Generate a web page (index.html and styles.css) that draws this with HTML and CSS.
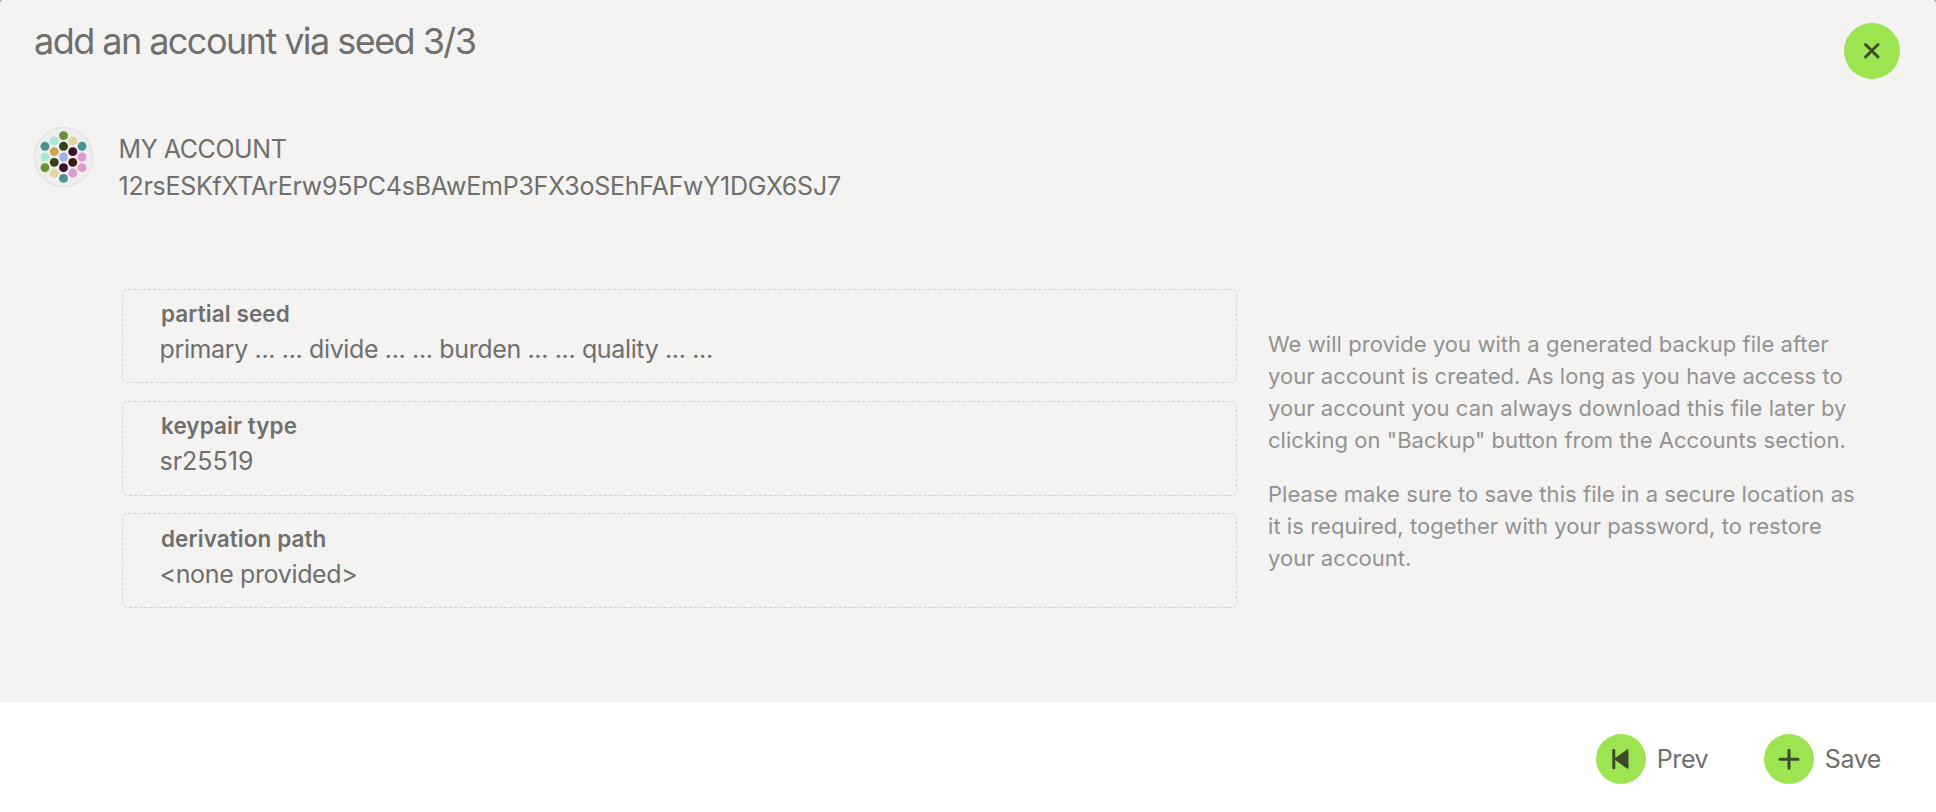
FILE: index.html
```html
<!DOCTYPE html>
<html lang="en">

<head>
  <meta charset="UTF-8">
  <meta name="viewport" content="width=device-width, initial-scale=1.0">
  <title>add an account via seed</title>
  <link rel="stylesheet" href="styles.css">
</head>

<body>
  <div class="modal">
    <div class="header">
      <h1 class="title">add an account via seed 3/3</h1>
      <button class="icon-button icon-button--close" aria-label="close">
        <svg width="56" height="56" viewBox="0 0 56 56">
          <path d="M21.5 21.5 34 34M34 21.5 21.5 34" />
        </svg>
      </button>
    </div>

    <div class="content">
      <div class="address">
        <svg class="identicon" viewBox="0 0 64 64">
          <circle cx="32" cy="32" r="32" fill="#eeeeee" />
          <circle cx="32" cy="8" r="5" fill="#67933a" />
          <circle cx="32" cy="20" r="5" fill="#354219" />
          <circle cx="21.6" cy="14" r="5" fill="#a9e8d2" />
          <circle cx="11.2" cy="20" r="5" fill="#4a9293" />
          <circle cx="21.6" cy="26" r="5" fill="#cfa250" />
          <circle cx="11.2" cy="32" r="5" fill="#a9e8d2" />
          <circle cx="11.2" cy="44" r="5" fill="#67933a" />
          <circle cx="21.6" cy="38" r="5" fill="#354219" />
          <circle cx="21.6" cy="50" r="5" fill="#e5d5a0" />
          <circle cx="32" cy="56" r="5" fill="#4a9293" />
          <circle cx="32" cy="44" r="5" fill="#3b112b" />
          <circle cx="42.4" cy="50" r="5" fill="#dc9bd3" />
          <circle cx="52.8" cy="44" r="5" fill="#dc9bd3" />
          <circle cx="42.4" cy="38" r="5" fill="#3d1c14" />
          <circle cx="52.8" cy="32" r="5" fill="#dc9bd3" />
          <circle cx="52.8" cy="20" r="5" fill="#4a9293" />
          <circle cx="42.4" cy="26" r="5" fill="#3b112b" />
          <circle cx="42.4" cy="14" r="5" fill="#e5d5a0" />
          <circle cx="32" cy="32" r="5" fill="#9eb2e5" />
        </svg>
        <div class="address__info">
          <div class="address__name">MY ACCOUNT</div>
          <div class="address__value">12rsESKfXTArErw95PC4sBAwEmP3FX3oSEhFAFwY1DGX6SJ7</div>
        </div>
      </div>

      <div class="columns">
        <div class="fields">
          <div class="field">
            <label class="field__label">partial seed</label>
            <div class="field__value field__value--text">primary ... ... divide ... ... burden ... ... quality ... ...</div>
          </div>
          <div class="field">
            <label class="field__label">keypair type</label>
            <div class="field__value">sr25519</div>
          </div>
          <div class="field">
            <label class="field__label">derivation path</label>
            <div class="field__value field__value--text">&lt;none provided&gt;</div>
          </div>
        </div>
        <div class="help">
          <p>We will provide you with a generated backup file after<br>your account is created. As long as you have access to<br>your account you can always download this file later by<br>clicking on "Backup" button from the Accounts section.</p>
          <p>Please make sure to save this file in a secure location as<br>it is required, together with your password, to restore<br>your account.</p>
        </div>
      </div>
    </div>

    <div class="actions">
      <button class="action">
        <svg class="action__icon" viewBox="0 0 50 50">
          <path d="M17.8 16.3V33.7" />
          <path class="solid" d="M19.5 25 31.5 16.2V33.8Z" />
        </svg>
        Prev
      </button>
      <button class="action">
        <svg class="action__icon" viewBox="0 0 50 50">
          <path d="M25 16.2V34.2M16 25.2H34" />
        </svg>
        Save
      </button>
    </div>
  </div>
</body>

</html>
```
FILE: styles.css
```css
* {
  box-sizing: border-box;
}

body {
  margin: 0;
  background: #8f8f8a;
  color: #6f6f6e;
  font-family: Inter, "Liberation Sans", sans-serif;
  font-size: 25px;
}

button {
  padding: 0;
  border: none;
  background: none;
  color: inherit;
  font: inherit;
}

svg {
  display: block;
}

.modal {
  display: flex;
  flex-direction: column;
  height: 812px;
  overflow: hidden;
  border-radius: 3px 3px 0 0;
  background: #f4f3f1;
}

.header {
  display: flex;
  justify-content: space-between;
  height: 127px;
  padding: 23px 36px 0 34px;
}

.title {
  margin: -4px 0 0;
  font-size: 36px;
  font-weight: 430;
  line-height: 44px;
  letter-spacing: -1.55px;
}

.icon-button {
  width: 56px;
  height: 56px;
  border-radius: 50%;
  background: #9de550;
}

.icon-button path,
.action__icon path {
  fill: none;
  stroke: #3f4a2c;
  stroke-width: 3;
  stroke-linecap: round;
  stroke-linejoin: round;
}

.content {
  flex: 1;
  padding: 0 34px;
}

.address {
  display: flex;
  gap: 25.5px;
  height: 161.6px;
}

.identicon {
  width: 59px;
  height: 60px;
  border: 1px solid #dddddd;
  border-radius: 50%;
}

.address__info {
  padding-top: 4px;
  line-height: 37px;
}

.address__name {
  letter-spacing: -0.43px;
}

.address__value {
  letter-spacing: -0.26px;
}

/* fields on the left, hint text on the right */
.columns {
  display: flex;
  align-items: center;
  gap: 31px;
  padding-left: 88px;
}

.fields {
  display: flex;
  flex-direction: column;
  gap: 17.45px;
  width: 1115px;
}

.field {
  height: 94.75px;
  padding: 7.6px 36.5px 0;
  border: 1px dashed #d4d3d1;
  border-radius: 6px;
}

.field__label {
  display: block;
  padding-left: 1.5px;
  font-size: 22.5px;
  font-weight: 600;
  line-height: 34px;
  letter-spacing: 0.08px;
}

.field__value {
  line-height: 36px;
}

.field__value--text {
  letter-spacing: -0.36px;
}

.help {
  padding-top: 6px;
  color: #929291;
  font-size: 22px;
  line-height: 32px;
  letter-spacing: 0.05px;
  white-space: nowrap;
}

.help p {
  margin: 0 0 22px;
}

.help p:last-child {
  margin-bottom: 0;
}

.actions {
  display: flex;
  justify-content: flex-end;
  gap: 55.5px;
  height: 110px;
  padding: 32px 55px 0 0;
  background: #ffffff;
}

.action {
  display: flex;
  align-items: center;
  gap: 11px;
  height: 50px;
  letter-spacing: -0.4px;
}

.action__icon {
  width: 50px;
  height: 50px;
  border-radius: 50%;
  background: #9de550;
}

.action__icon .solid {
  fill: #3f4a2c;
  stroke-width: 2;
}
```
